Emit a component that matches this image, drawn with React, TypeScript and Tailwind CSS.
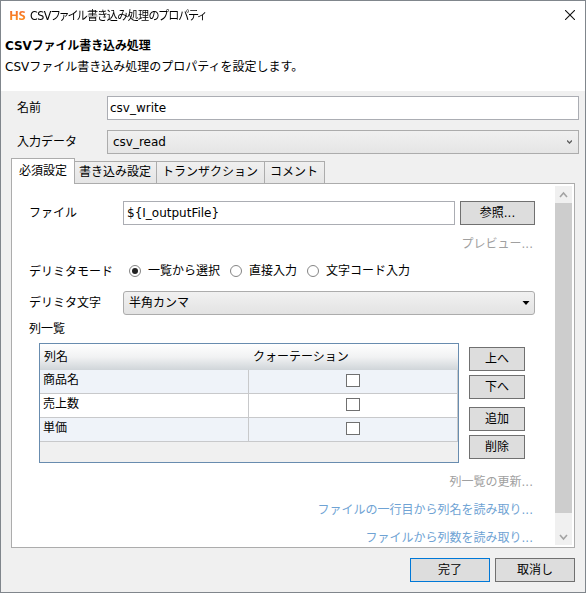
import React from 'react'
import clsx from 'clsx'

const tabs = [
  { label: '必須設定', width: 'w-16' },
  { label: '書き込み設定', width: 'w-[82px]' },
  { label: 'トランザクション', width: 'w-[108px]' },
  { label: 'コメント', width: 'w-[60px]' },
]

const rows = ['商品名', '売上数', '単価']

const modes = [
  { label: '一覧から選択', width: 'w-[101px]' },
  { label: '直接入力', width: 'w-[77px]' },
  { label: '文字コード入力', width: 'w-[110px]' },
]

const links = [
  { label: '列一覧の更新', color: 'text-[#a0a0a0]' },
  { label: 'ファイルの一行目から列名を読み取り', color: 'text-[#6fa3d4]' },
  { label: 'ファイルから列数を読み取り', color: 'text-[#6fa3d4]' },
]

const Button = ({ children, className }: { children: React.ReactNode; className?: string }) => (
  <button className={clsx('block h-6 shrink-0 border bg-[#dddddd] text-center leading-[22px]', className)}>
    {children}
  </button>
)

const TitleBar = () => (
  <div className="flex h-[30px] items-start pl-2">
    <span className="mt-[6px] w-[21px] bg-linear-to-b from-[#f0602a] to-[#ff9a1a] bg-clip-text font-['Open_Sans'] text-[13px] leading-[17px] font-bold tracking-[-0.5px] text-transparent">HS</span>
    <span className="mt-[6px] origin-left scale-x-[0.925] text-[12px] leading-[18px] tracking-[-0.6px] whitespace-nowrap [font-feature-settings:'palt']">CSVファイル書き込み処理のプロパティ</span>
    <svg className="mt-[9px] mr-[10px] ml-auto" width="10" height="10" viewBox="0 0 10 10" fill="none" stroke="#111">
      <path d="M0 0L10 10M10 0L0 10" strokeWidth="1.1" />
    </svg>
  </div>
)

const Tabs = () => (
  <div className="flex h-6 items-end">
    {tabs.map((tab, i) => (
      <div
        key={tab.label}
        className={clsx(
          'shrink-0 border-[#acacac] text-center whitespace-nowrap',
          tab.width,
          i === 0
            ? 'relative -mb-px h-[26px] border-t border-r border-l bg-white leading-[25px]'
            : 'h-[22px] border-t border-r bg-linear-to-b from-[#f0f0f0] to-[#e5e5e5] pr-px leading-[21px]'
        )}
      >
        {tab.label}
      </div>
    ))}
  </div>
)

const ColumnTable = () => (
  <div className="h-[120px] w-[420px] border border-[#688caf] bg-[#f0f0f0]">
    <div className="flex h-[26px] bg-linear-to-b from-white via-[#f1f2f3] to-[#d0d5d9] leading-[27px]">
      <span className="w-[209px] pl-1">列名</span>
      <span className="pl-1">クォーテーション</span>
    </div>
    {rows.map((row, i) => (
      <div key={row} className={clsx('flex h-6 border-b border-[#c8c9cb]', i % 2 ? 'bg-white' : 'bg-[#eff3f9]')}>
        <span className="w-[209px] border-r border-[#c8c9cb] pl-[3px] leading-[21px]">{row}</span>
        <span className="flex w-[209px] justify-center border-r border-[#c8c9cb] pt-1">
          <span className="h-[13px] w-[14px] border border-[#707070] bg-white" />
        </span>
      </div>
    ))}
  </div>
)

const Scrollbar = () => (
  <div className="mt-[2px] flex h-[359px] w-[17px] flex-col bg-[#f0f0f0]">
    <svg width="17" height="17" viewBox="0 0 17 17" fill="none" stroke="#a3a3a3" strokeWidth="1.6">
      <path d="M5 11L8.5 7L12 11" />
    </svg>
    <div className="h-[310px] bg-[#cdcdcd]" />
    <svg className="mt-[15px]" width="17" height="17" viewBox="0 0 17 17" fill="none" stroke="#a3a3a3" strokeWidth="1.6">
      <path d="M5 7L8.5 11L12 7" />
    </svg>
  </div>
)

const Settings = () => (
  <div className="w-[524px] pt-[17px] pl-[17px]">
    <div className="flex h-6 leading-[25px]">
      <span className="w-[94px]">ファイル</span>
      <div className="mr-[5px] h-6 w-[332px] border border-[#abadb3] pl-[3px] leading-[22px]">{'${I_outputFile}'}</div>
      <Button className="w-[75px] border-[#707070]">参照...</Button>
    </div>
    <div className="mt-[8px] pr-[3px] text-right leading-[22px] text-[#a0a0a0]">プレビュー...</div>

    <div className="mt-[5px] flex h-[22px] items-center leading-[22px]">
      <span className="w-[100px] pt-px">デリミタモード</span>
      {modes.map((mode, i) => (
        <span key={mode.label} className={clsx('flex items-center gap-[7px] whitespace-nowrap', mode.width)}>
          <span className="flex size-3 shrink-0 items-center justify-center rounded-full border border-[#858585] bg-white">
            {i === 0 && <span className="size-[6px] rounded-full bg-[#222]" />}
          </span>
          {mode.label}
        </span>
      ))}
    </div>

    <div className="mt-[9px] flex h-6 leading-[25px]">
      <span className="w-[94px]">デリミタ文字</span>
      <div className="flex h-6 w-[412px] items-center justify-between rounded-[3px] border border-[#acacac] bg-linear-to-b from-[#f1f1f1] to-[#e3e3e3] pr-[4px] pl-[5px] leading-[22px]">
        半角カンマ
        <svg width="8" height="4" viewBox="0 0 8 4"><path d="M.5 0H7.5L4 4Z" /></svg>
      </div>
    </div>
    <div className="mt-[2px] leading-[24px]">列一覧</div>

    <div className="mt-[2px] ml-[10px] flex">
      <ColumnTable />
      <div className="mt-1 ml-[10px] w-14">
        <Button className="w-full border-[#707070]">上へ</Button>
        <Button className="mt-1 w-full border-[#707070]">下へ</Button>
        <Button className="mt-2 w-full border-[#707070]">追加</Button>
        <Button className="mt-1 w-full border-[#707070]">削除</Button>
      </div>
    </div>

    <div className="mt-[5px] pr-[3px] text-right">
      {links.map((link) => (
        <div key={link.label} className={clsx('h-7 leading-[28px]', link.color)}>{link.label}...</div>
      ))}
    </div>
  </div>
)

export default function App() {
  return (
    <div className="h-[593px] w-[586px] overflow-hidden border border-[#80868c] bg-[#f0f0f0] font-['DejaVu_Sans','Noto_Sans_CJK_JP',sans-serif] text-[12px] text-black">
      <div className="h-[90px] bg-white">
        <TitleBar />
        <div className="pl-1 leading-[21px]">
          <div className="mt-[5px] font-bold tracking-[-0.1px]">CSVファイル書き込み処理</div>
          <div>CSVファイル書き込み処理のプロパティを設定します。</div>
        </div>
      </div>

      <div className="mt-[5px] flex h-6 pl-4 leading-[25px]">
        <span className="w-[90px]">名前</span>
        <div className="h-6 w-[472px] border border-[#abadb3] bg-white pl-[2px] leading-[22px]">csv_write</div>
      </div>
      <div className="mt-[10px] flex h-6 pl-4 leading-[25px]">
        <span className="w-[90px]">入力データ</span>
        <div className="flex h-6 w-[472px] items-center justify-between border border-[#acacac] bg-linear-to-b from-[#f0f0f0] to-[#e5e5e5] pr-[6px] pl-[5px] leading-[22px]">
          csv_read
          <svg width="5" height="4" viewBox="0 0 5 4" fill="none" stroke="#606060" strokeWidth="1.4">
            <path d="M0 .5L2.5 3L5 .5" />
          </svg>
        </div>
      </div>

      <div className="mt-[5px] pl-[10px]">
        <Tabs />
        <div className="flex h-[365px] w-[564px] overflow-hidden border border-[#acacac] bg-white">
          <Settings />
          <div className="ml-[19px]">
            <Scrollbar />
          </div>
        </div>
      </div>

      <div className="mt-[10px] flex justify-end gap-[5px] pr-[10px]">
        <Button className="w-20 border-[#0078d7]">完了</Button>
        <Button className="w-20 border-[#707070]">取消し</Button>
      </div>
    </div>
  )
}
